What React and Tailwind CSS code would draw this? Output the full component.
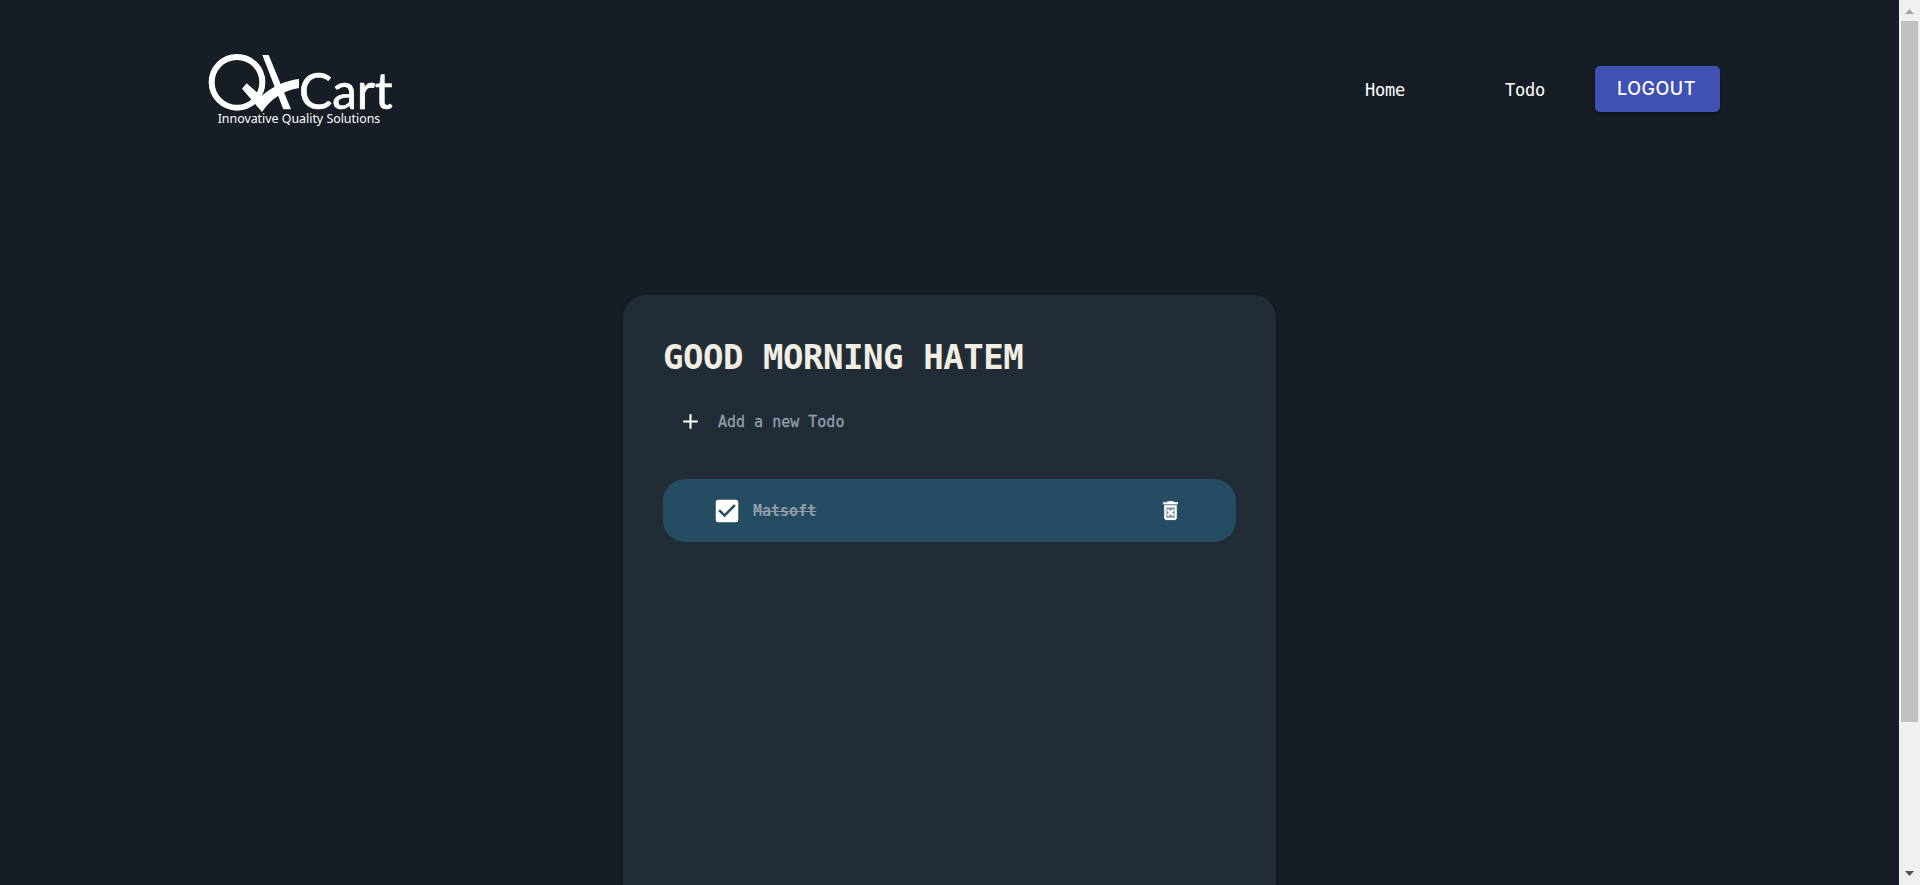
import { MdAdd, MdCheckBox } from "react-icons/md";

function Logo() {
  return (
    <svg width="210" height="100" viewBox="0 0 630 300" className="block text-white" fill="none" stroke="currentColor">
      <circle cx="126" cy="127" r="76" strokeWidth="18" />
      <path d="M202 45H221L288 208H265Z" fill="currentColor" stroke="none" />
      <path d="M141 146L155 130L199 169C229 142 268 122 312 117V144C264 151 226 179 201 216Z" fill="currentColor" stroke="none" />
      <text x="312" y="208" fontSize="152" textLength="281" lengthAdjust="spacingAndGlyphs" fill="currentColor" strokeWidth="2" className="font-['Lato',sans-serif]">Cart</text>
      <g transform="translate(68 249) scale(0.86 1)">
        <text fontSize="39" textLength="567" lengthAdjust="spacingAndGlyphs" fill="currentColor" stroke="none" className="font-['Noto_Sans',sans-serif]">Innovative Quality Solutions</text>
      </g>
    </svg>
  );
}

function TrashIcon() {
  return (
    <svg width="25" height="25" viewBox="0 0 24 24" fill="currentColor" className="text-white">
      <path d="M8 9H16V19H8Z" opacity="0.4" />
      <path d="M14.120 10.470L12 12.590L9.870 10.470L8.460 11.880L10.590 14L8.470 16.120L9.880 17.530L12 15.410L14.120 17.530L15.530 16.120L13.410 14L15.530 11.880L14.120 10.470ZM15.500 4L14.500 3H9.500L8.500 4H5V6H19V4H15.500ZM6 19C6 20.100 6.900 21 8 21H16C17.100 21 18 20.100 18 19V7H6V19ZM8 9H16V19H8V9Z" fillRule="evenodd" stroke="currentColor" strokeWidth="0.25" />
    </svg>
  );
}

function Header() {
  return (
    <header className="flex items-start justify-between pl-[195px] pr-[179px] pt-10">
      <Logo />
      <nav className="flex items-start pt-[26px] text-[17px] text-white">
        <a className="mr-[100px] pt-[11px] leading-[26px] tracking-[-0.23px]">Home</a>
        <a className="mr-[50px] pt-[11px] leading-[26px] tracking-[-0.23px]">Todo</a>
        <button className="h-[46px] w-[125px] rounded-[5px] bg-[#3f51b5] pb-px pr-[2px] font-['Inter',sans-serif] text-[18px] font-medium tracking-[0.5px] shadow-[0_3px_3px_rgba(0,0,0,0.25)]">
          LOGOUT
        </button>
      </nav>
    </header>
  );
}

function TodoRow({ title }) {
  return (
    <li className="flex h-[63px] items-center rounded-[22px] bg-[#244d61] pl-[49px] pr-[53px]">
      <MdCheckBox size={30} className="shrink-0 text-white" />
      <span className="ml-[11px] flex-1 pt-0.5 text-[15px] font-bold text-[#919baa] line-through decoration-1">{title}</span>
      <TrashIcon />
    </li>
  );
}

function Scrollbar() {
  return (
    <div className="flex w-[21px] shrink-0 flex-col items-center bg-[#f0f0f0]">
      <svg width="21" height="21" viewBox="0 0 21 21"><path d="M6 14L10.500 9L15 14Z" fill="#a3a3a3" /></svg>
      <div className="h-[701px] w-[17px] bg-[#c1c1c1]" />
      <svg width="21" height="21" viewBox="0 0 21 21" className="mt-auto"><path d="M6 7H15L10.500 12Z" fill="#505050" /></svg>
    </div>
  );
}

export default function App() {
  return (
    <div className="flex h-[885px] w-[1920px] overflow-hidden bg-[#171d25] font-['DejaVu_Sans_Mono',monospace]">
      <div className="h-full flex-1">
        <Header />
        <main className="mx-auto mt-[155px] h-[800px] w-[653px] rounded-t-[22px] bg-[#222c36] px-10 pt-[39px] shadow-[0_0_3px_rgba(0,0,0,0.35)]">
          <h1 className="h-[46px] whitespace-nowrap text-[34px] font-bold leading-[46px] tracking-[-0.46px] text-[#f0ede3]">GOOD MORNING HATEM</h1>
          <div className="mt-[29px] flex h-[25px] items-center pl-[15px]">
            <MdAdd size={25} className="text-white" />
            <span className="ml-[15px] pt-0.5 text-[15px] text-[#919fae] [-webkit-text-stroke:0.3px_#919fae]">Add a new Todo</span>
          </div>
          <ul className="mt-[45px]">
            <TodoRow title="Matsoft" />
          </ul>
        </main>
      </div>
      <Scrollbar />
    </div>
  );
}
